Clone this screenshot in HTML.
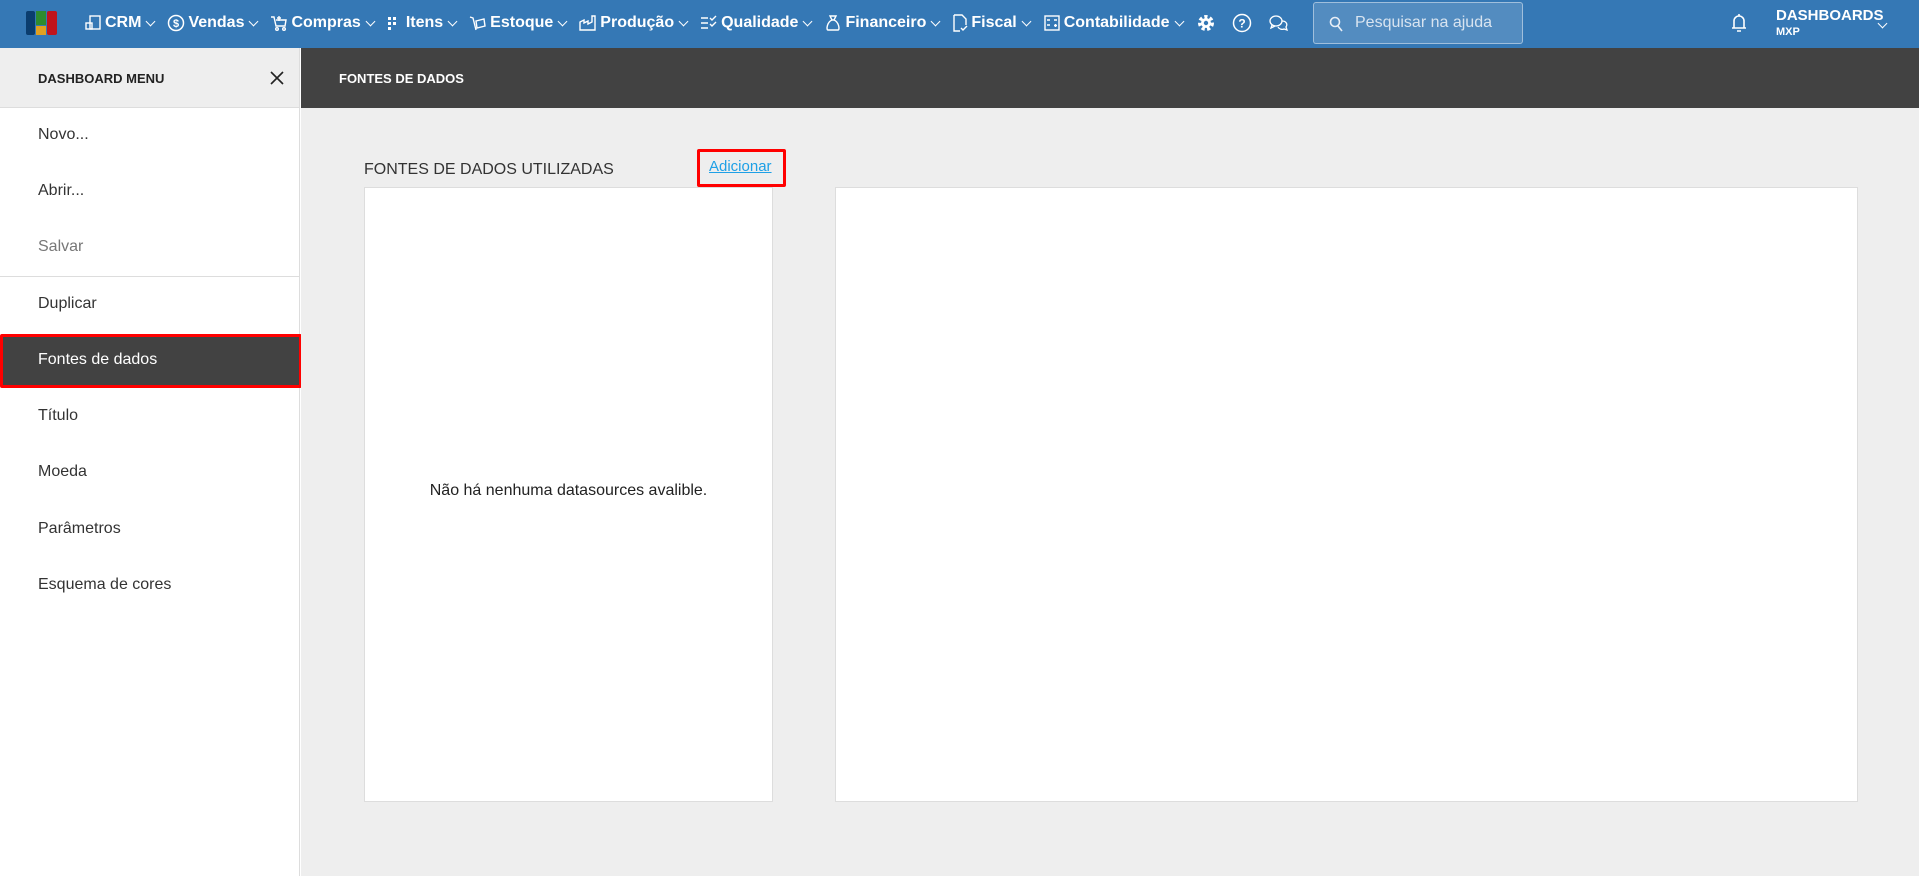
<!DOCTYPE html>
<html><head><meta charset="utf-8"><style>
*{box-sizing:border-box;margin:0;padding:0}
body{width:1919px;height:894px;overflow:hidden;background:#fff;font-family:"Liberation Sans",Arial,sans-serif;position:relative}
.top{position:absolute;left:0;top:0;width:1919px;height:48px;background:#3578b5;color:#fff}
.nav{position:absolute;top:13px;left:84px;display:flex;align-items:center;font-weight:bold;font-size:16px;white-space:nowrap}
.nav span{margin-right:13px;display:flex;align-items:center}
.nav svg{margin-right:3px}
.chev{display:inline-block;width:7px;height:7px;border-right:1.6px solid #fff;border-bottom:1.6px solid #fff;transform:rotate(45deg);margin:-4px 0 0 6px}
.side{position:absolute;left:0;top:48px;width:300px;height:828px;background:#fff;border-right:1px solid #ddd}
.sh{height:60px;background:#eee;border-bottom:1px solid #ddd;position:relative;font-weight:bold;font-size:13px;color:#222;padding:23px 0 0 38px}
.item{position:absolute;left:38px;font-size:16px;color:#333}
.main{position:absolute;left:301px;top:48px;width:1618px;height:828px;background:#eee}
.mh{height:60px;background:#424242;color:#fff;font-weight:bold;font-size:13px;padding:23px 0 0 38px}
.panel{position:absolute;background:#fff;border:1px solid #ddd}
</style></head><body>
<div class="top">
  <div style="position:absolute;left:26px;top:11px;width:31px;height:24px">
    <div style="position:absolute;left:0;top:0;width:9px;height:24px;background:#0b3d6e;border-radius:2px"></div>
    <div style="position:absolute;left:10px;top:0;width:10px;height:14px;background:#2e8b2e"></div>
    <div style="position:absolute;left:10px;top:15px;width:10px;height:9px;background:#e0a020"></div>
    <div style="position:absolute;left:21px;top:0;width:10px;height:24px;background:#c0141c;border-radius:2px"></div>
  </div>
  <div class="nav">
    <span><svg width="18" height="18" viewBox="0 0 18 18" fill="none" stroke="#fff" stroke-width="1.4"><rect x="6" y="2" width="10" height="13"/><rect x="2" y="9" width="6" height="6"/></svg>CRM<i class="chev"></i></span>
    <span><svg width="18" height="18" viewBox="0 0 18 18" fill="none" stroke="#fff" stroke-width="1.5"><circle cx="9" cy="9" r="7.5"/><text x="9" y="13" font-size="11" fill="#fff" stroke="none" text-anchor="middle" font-family="Liberation Sans">$</text></svg>Vendas<i class="chev"></i></span>
    <span><svg width="18" height="18" viewBox="0 0 18 18" fill="none" stroke="#fff" stroke-width="1.4"><path d="M1 3h3l2 9h9l1-6H6M9 2v5M7 4h4"/><circle cx="7" cy="15" r="1.3"/><circle cx="14" cy="15" r="1.3"/></svg>Compras<i class="chev"></i></span>
    <span><svg width="16" height="18" viewBox="0 0 16 18" fill="#fff"><rect x="1" y="3" width="3" height="3"/><rect x="6" y="3" width="3" height="3"/><rect x="1" y="8" width="3" height="3"/><rect x="6" y="8" width="3" height="3"/><rect x="1" y="13" width="3" height="3"/></svg>Itens<i class="chev"></i></span>
    <span><svg width="18" height="18" viewBox="0 0 18 18" fill="none" stroke="#fff" stroke-width="1.4"><path d="M1 3l3 1 3 12M7 7l8-2 1 7-8 2z"/></svg>Estoque<i class="chev"></i></span>
    <span><svg width="18" height="18" viewBox="0 0 18 18" fill="none" stroke="#fff" stroke-width="1.4"><path d="M1 16V8l4-2v3l4-2v3l4-2V2h3v14z"/></svg>Produção<i class="chev"></i></span>
    <span><svg width="18" height="18" viewBox="0 0 18 18" fill="none" stroke="#fff" stroke-width="1.4"><path d="M1 4h7M1 9h7M1 14h7M10 4l2 2 4-4M10 10l2 2 4-4"/></svg>Qualidade<i class="chev"></i></span>
    <span><svg width="18" height="18" viewBox="0 0 18 18" fill="none" stroke="#fff" stroke-width="1.4"><path d="M6 2h6l-2 4h-2zM8 6C3 8 2 16 4 16h10c2 0 1-8-4-10"/></svg>Financeiro<i class="chev"></i></span>
    <span><svg width="16" height="18" viewBox="0 0 16 18" fill="none" stroke="#fff" stroke-width="1.4"><path d="M2 1h8l4 4v6M2 1v16h6M9 14l2 2 4-4"/></svg>Fiscal<i class="chev"></i></span>
    <span><svg width="18" height="18" viewBox="0 0 18 18" fill="none" stroke="#fff" stroke-width="1.4"><rect x="2" y="2" width="14" height="14"/><path d="M4 6h3M11 6h3M4 11h3M12.5 10v3M11 11.5h3"/></svg>Contabilidade<i class="chev"></i></span>
    <span><svg width="20" height="20" viewBox="0 0 20 20"><circle cx="10" cy="10" r="6" fill="none" stroke="#fff" stroke-width="4" stroke-dasharray="3 2.3"/><circle cx="10" cy="10" r="5" fill="#fff"/><circle cx="10" cy="10" r="2.2" fill="#3578b5"/></svg></span>
    <span><svg width="20" height="20" viewBox="0 0 20 20" fill="none" stroke="#fff" stroke-width="1.5"><circle cx="10" cy="10" r="8.5"/><text x="10" y="14.5" font-size="12" fill="#fff" stroke="none" text-anchor="middle" font-family="Liberation Sans" font-weight="bold">?</text></svg></span>
    <span><svg width="22" height="20" viewBox="0 0 22 20" fill="none" stroke="#fff" stroke-width="1.3"><ellipse cx="8" cy="8" rx="6" ry="5"/><path d="M4 12l-1 3 4-2M14 8c4 0 6 3 4 6l1 3-3-1c-2 1-5 0-6-2"/></svg></span>
  </div>
  <div style="position:absolute;left:1313px;top:2px;width:210px;height:42px;border:1px solid rgba(255,255,255,.45);background:rgba(255,255,255,.15);border-radius:3px">
    <svg style="position:absolute;left:15px;top:13px" width="14" height="16" viewBox="0 0 14 16" fill="none" stroke="#e8eef6" stroke-width="1.6"><circle cx="6" cy="6" r="4.5"/><path d="M9 10l4 5"/></svg>
    <div style="position:absolute;left:41px;top:11px;font-size:16px;color:#d8e4f0">Pesquisar na ajuda</div>
  </div>
  <svg style="position:absolute;left:1730px;top:12px" width="18" height="22" viewBox="0 0 18 22" fill="none" stroke="#fff" stroke-width="1.6"><path d="M4 16V9a5 5 0 0 1 10 0v7zM2 16h14M9 2v2M7 19h4"/></svg>
  <div style="position:absolute;left:1776px;top:7px;font-weight:bold;font-size:15px">DASHBOARDS</div>
  <div style="position:absolute;left:1776px;top:26px;font-weight:bold;font-size:11px">MXP</div>
  <i class="chev" style="position:absolute;left:1879px;top:20px;margin:0"></i>
</div>
<div class="side">
  <div class="sh">DASHBOARD MENU
    <svg style="position:absolute;left:270px;top:23px" width="14" height="14" viewBox="0 0 14 14" stroke="#222" stroke-width="1.6"><path d="M1 1l12 12M13 1L1 13"/></svg>
  </div>
  <div class="item" style="top:78px">Novo...</div>
  <div class="item" style="top:134px">Abrir...</div>
  <div class="item" style="top:190px;color:#777">Salvar</div>
  <div style="position:absolute;left:0;top:228px;width:300px;height:1px;background:#ddd"></div>
  <div class="item" style="top:247px">Duplicar</div>
  <div style="position:absolute;left:0;top:286px;width:302px;height:54px;background:#424242;border:3px solid #f00;border-radius:2px"></div>
  <div class="item" style="top:303px;color:#fff">Fontes de dados</div>
  <div class="item" style="top:359px">Título</div>
  <div class="item" style="top:415px">Moeda</div>
  <div class="item" style="top:472px">Parâmetros</div>
  <div class="item" style="top:528px">Esquema de cores</div>
</div>
<div class="main">
  <div class="mh">FONTES DE DADOS</div>
  <div style="position:absolute;left:63px;top:113px;font-size:16px;color:#333">FONTES DE DADOS UTILIZADAS</div>
  <div style="position:absolute;left:396px;top:101px;width:89px;height:38px;border:3px solid #f00;border-radius:2px"></div>
  <div style="position:absolute;left:408px;top:110px;font-size:15px;color:#1ea0e6;text-decoration:underline">Adicionar</div>
  <div class="panel" style="left:63px;top:139px;width:409px;height:615px">
    <div style="position:absolute;left:0;width:100%;top:294px;text-align:center;font-size:16px;color:#222">Não há nenhuma datasources avalible.</div>
  </div>
  <div class="panel" style="left:534px;top:139px;width:1023px;height:615px"></div>
</div>
</body></html>
